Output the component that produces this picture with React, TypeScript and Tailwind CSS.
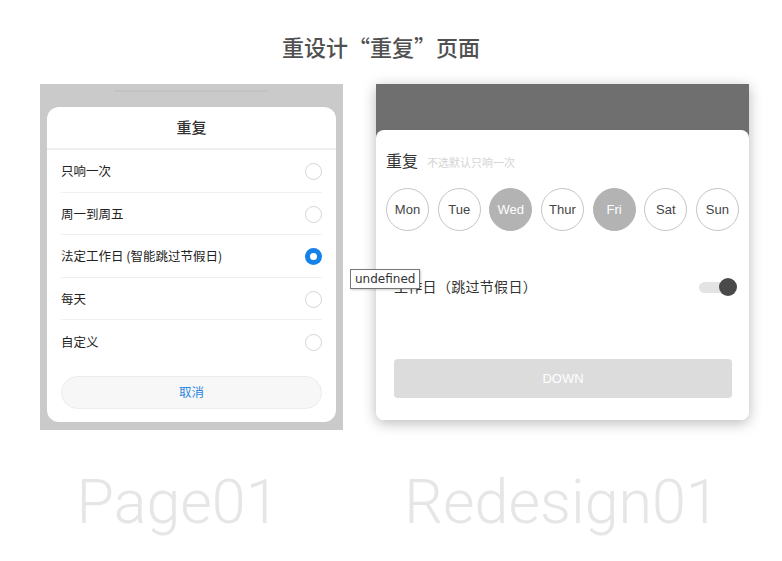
const cjk = "font-['Microsoft_YaHei','Noto_Sans_CJK_SC',sans-serif]";

const options = [
  { label: "只响一次", checked: false },
  { label: "周一到周五", checked: false },
  { label: "法定工作日 (智能跳过节假日)", checked: true },
  { label: "每天", checked: false },
  { label: "自定义", checked: false },
];

const days = [
  { name: "Mon", on: false },
  { name: "Tue", on: false },
  { name: "Wed", on: true },
  { name: "Thur", on: false },
  { name: "Fri", on: true },
  { name: "Sat", on: false },
  { name: "Sun", on: false },
];

function Radio({ checked }: { checked: boolean }) {
  if (checked) {
    return (
      <span className="flex h-[17px] w-[17px] items-center justify-center rounded-full bg-[#1781ea]">
        <span className="h-[7px] w-[7px] rounded-full bg-white" />
      </span>
    );
  }
  return <span className="h-[17px] w-[17px] rounded-full border border-[#d4d4d4] bg-white" />;
}

function OldPage() {
  return (
    <div className="flex h-[346px] w-[303px] flex-col bg-[#cacaca] px-[7px]">
      <div className="flex h-[23px] items-center justify-center">
        <div className="mb-[10px] h-[2px] w-[153px] bg-[#c2c2c2]" />
      </div>
      <div className={`flex flex-col rounded-[12px] bg-white px-[14px] pb-[13px] ${cjk}`}>
        <div className="-mx-[14px] flex h-[43px] items-center justify-center border-b-2 border-[#efefef] text-[15px] font-medium text-[#333]">
          重复
        </div>
        {options.map((o, i) => (
          <div
            key={o.label}
            className={`flex h-[42.5px] items-center justify-between pt-[2px] text-[12.5px] text-[#222] ${
              i < options.length - 1 ? "border-b border-[#f0f0f0]" : ""
            }`}
          >
            <span>{o.label}</span>
            <Radio checked={o.checked} />
          </div>
        ))}
        <div className="mt-[13px] flex h-[33px] items-center justify-center rounded-full border border-[#ececec] bg-[#f7f7f7] text-[12.5px] text-[#2b87e3]">
          取消
        </div>
      </div>
    </div>
  );
}

function NewPage() {
  return (
    <div className="flex w-[373px] flex-col rounded-b-[8px] shadow-[0_3px_14px_rgba(0,0,0,0.28)]">
      <div className="h-[56px] bg-[#6f6f6f]" />
      <div className="relative -mt-[10px] flex h-[290px] flex-col rounded-[8px] bg-white pt-[18px]">
        <div className={`flex items-baseline gap-[9px] px-[10px] ${cjk}`}>
          <span className="text-[16px] text-[#333]">重复</span>
          <span className="text-[11px] text-[#d4d4d4]">不选默认只响一次</span>
        </div>
        <div className="mt-[16px] flex justify-between px-[10px] font-['Liberation_Sans',Arial,sans-serif]">
          {days.map((d) => (
            <div
              key={d.name}
              className={`flex h-[43px] w-[43px] items-center justify-center rounded-full border text-[13px] ${
                d.on ? "border-[#b3b3b3] bg-[#b3b3b3] text-white" : "border-[#c4c4c4] bg-white text-[#444]"
              }`}
            >
              {d.name}
            </div>
          ))}
        </div>
        <div className={`mt-[45px] flex items-center justify-between pl-[18px] pr-[12px] ${cjk}`}>
          <span className="text-[14px] tracking-[0.3px] text-[#333]">工作日（跳过节假日）</span>
          <div className="relative h-[18px] w-[38px]">
            <div className="absolute left-0 top-[4px] h-[11px] w-[34px] rounded-full bg-[#e3e3e3]" />
            <div className="absolute right-0 top-0 h-[18px] w-[18px] rounded-full bg-[#4a4a4a]" />
          </div>
        </div>
        <div className="ml-[18px] mr-[17px] mt-[62px] flex h-[39px] items-center justify-center rounded-[4px] bg-[#dcdcdc] font-['Liberation_Sans',Arial,sans-serif] text-[13px] text-white">
          DOWN
        </div>
      </div>
    </div>
  );
}

export default function App() {
  return (
    <div className="relative h-[561px] w-[782px] bg-white">
      <div className={`flex h-[84px] items-start justify-center pr-[20px] pt-[30px] text-[22px] font-medium text-[#505050] ${cjk}`}>
        重设计“重复”页面
      </div>
      <div className="flex items-start pl-[40px]">
        <OldPage />
        <div className="ml-[33px]">
          <NewPage />
        </div>
      </div>
      <div className="mt-[42px] flex font-['Roboto',sans-serif] text-[61px] font-light leading-none text-[#e6e6e6]">
        <div className="w-[356px] text-center">Page01</div>
        <div className="w-[412px] text-center">Redesign01</div>
      </div>
      <div className="absolute left-[350px] top-[269px] border border-[#777] bg-white px-[4px] py-[1px] font-['DejaVu_Sans',sans-serif] text-[12px] leading-[16px] text-[#333] shadow-[1px_1px_2px_rgba(0,0,0,0.2)]">
        undefined
      </div>
    </div>
  );
}
